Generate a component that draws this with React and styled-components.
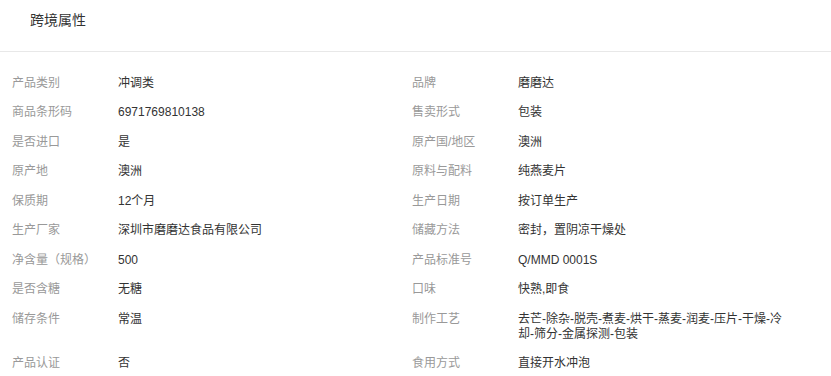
import React from "react";
import styled, { createGlobalStyle } from "styled-components";

const Global = createGlobalStyle`
  html, body { margin: 0; padding: 0; background: #fff; }
  body { font-family: "Liberation Sans", Arial, "Noto Sans CJK SC", sans-serif; }
`;

const Panel = styled.div`
  width: 831px;
  background: #fff;
`;

const Header = styled.div`
  box-sizing: border-box;
  height: 52px;
  padding: 11px 30px 0;
  border-bottom: 1px solid #e8e8e8;
`;

const Title = styled.h3`
  margin: 0;
  font-size: 14px;
  font-weight: normal;
  line-height: 18px;
  color: #333;
`;

const Grid = styled.div`
  display: grid;
  grid-template-columns: 400px 400px;
  padding: 16.25px 12px 0;
`;

const Cell = styled.div`
  display: flex;
  padding: 7.25px 16px 7.25px 0;
  font-size: 12px;
  line-height: 15px;
`;

const Label = styled.div`
  flex: 0 0 106px;
  color: #999;
`;

const Value = styled.div`
  flex: 1;
  color: #333;
  word-break: break-all;
`;

const rows = [
  ["产品类别", "冲调类", "品牌", "磨磨达"],
  ["商品条形码", "6971769810138", "售卖形式", "包装"],
  ["是否进口", "是", "原产国/地区", "澳洲"],
  ["原产地", "澳洲", "原料与配料", "纯燕麦片"],
  ["保质期", "12个月", "生产日期", "按订单生产"],
  ["生产厂家", "深圳市磨磨达食品有限公司", "储藏方法", "密封，置阴凉干燥处"],
  ["净含量（规格）", "500", "产品标准号", "Q/MMD 0001S"],
  ["是否含糖", "无糖", "口味", "快熟,即食"],
  ["储存条件", "常温", "制作工艺", "去芒-除杂-脱壳-煮麦-烘干-蒸麦-润麦-压片-干燥-冷却-筛分-金属探测-包装"],
  ["产品认证", "否", "食用方式", "直接开水冲泡"],
];

export default function App() {
  return (
    <Panel>
      <Global />
      <Header>
        <Title>跨境属性</Title>
      </Header>
      <Grid>
        {rows.map(([l1, v1, l2, v2]) => (
          <React.Fragment key={l1}>
            <Cell>
              <Label>{l1}</Label>
              <Value>{v1}</Value>
            </Cell>
            <Cell>
              <Label>{l2}</Label>
              <Value>{v2}</Value>
            </Cell>
          </React.Fragment>
        ))}
      </Grid>
    </Panel>
  );
}
